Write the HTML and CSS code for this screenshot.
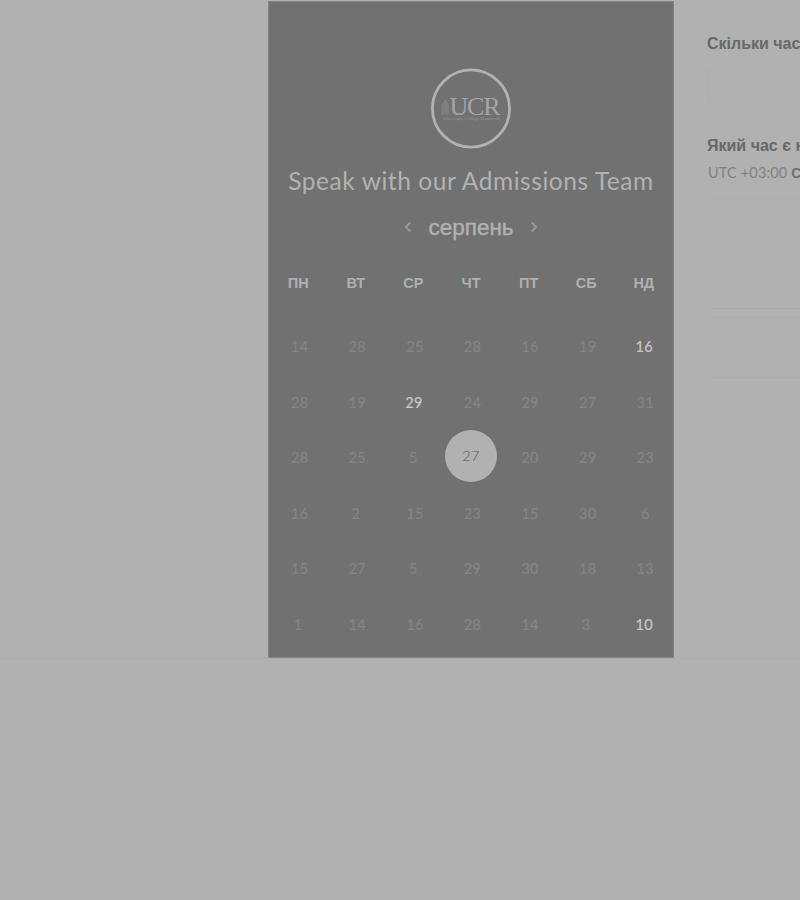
FILE: index.html
```
<!DOCTYPE html>
<html lang="uk">
<head>
<meta charset="utf-8">
<title>Speak with our Admissions Team</title>
<link rel="stylesheet" href="styles.css">
</head>
<body>
<div class="booking">
  <main class="calendar">
    <svg class="logo" viewBox="0 0 80 80" role="img" aria-label="UCR">
      <circle class="ring" cx="40" cy="40" r="38.6"/>
      <path class="tower" d="M10.500 46V36l2-2 2-4 2 4 1.500 2v10z"/>
      <text class="logo-name" x="18.500" y="46.300" textLength="51" lengthAdjust="spacing">UCR</text>
      <text class="logo-sub" x="12" y="51.500" textLength="57" lengthAdjust="spacingAndGlyphs">University College Roosevelt</text>
    </svg>
    <h1 class="title">Speak with our Admissions Team</h1>
    <div class="month">
      <svg class="arrow" viewBox="0 0 8 12"><path d="M6.200 1.500 2 6l4.200 4.500"/></svg>
      <span class="month-name">серпень</span>
      <svg class="arrow" viewBox="0 0 8 12"><path d="M1.800 1.500 6 6l-4.200 4.500"/></svg>
    </div>
    <div class="weekdays"><span>ПН</span><span>ВТ</span><span>СР</span><span>ЧТ</span><span>ПТ</span><span>СБ</span><span>НД</span></div>
    <div class="days">
      <span>14</span><span>28</span><span>25</span><span>28</span><span>16</span><span>19</span><span class="open">16</span>
      <span>28</span><span>19</span><span class="open">29</span><span>24</span><span>29</span><span>27</span><span>31</span>
      <span>28</span><span>25</span><span class="single">5</span><span class="selected"><b>27</b></span><span>20</span><span>29</span><span>23</span>
      <span>16</span><span class="single">2</span><span>15</span><span>23</span><span>15</span><span>30</span><span>6</span>
      <span>15</span><span>27</span><span class="single">5</span><span>29</span><span>30</span><span>18</span><span>13</span>
      <span class="single">1</span><span>14</span><span>16</span><span>28</span><span>14</span><span class="single">3</span><span class="open">10</span>
    </div>
  </main>
  <aside class="details">
    <h2>Скільки час</h2>
    <div class="duration"></div>
    <h2>Який час є н</h2>
    <p class="zone"><span>UTC +03:00</span> <strong>С</strong></p>
    <div class="slot slot-tall"></div>
    <div class="slot"></div>
  </aside>
</div>
</body>
</html>
```
FILE: styles.css
```
* { box-sizing: border-box; }
body {
  margin: 0;
  height: 900px;
  overflow: hidden;
  background: #b1b1b1;
  font-family: "Liberation Sans", sans-serif;
}
.booking {
  display: flex;
  width: 100%;
  height: 659px;
  padding: 1px 0 0 268px;
  border-bottom: 1px solid #adadad;
}
.calendar {
  display: flex;
  flex-direction: column;
  align-items: center;
  flex: none;
  width: 406px;
  height: 657px;
  padding-top: 67px;
  background: #717171;
  border: 1px solid #848484;
}
.logo { flex: none; width: 80px; height: 81px; margin-top: -1px; }
.ring { fill: none; stroke: #b2b2b2; stroke-width: 2.8; }
.tower { fill: #808080; }
.logo-name { font: 26px "Liberation Serif", serif; fill: #a5a5a5; }
.logo-sub { font: 4.5px "Liberation Serif", serif; fill: #999; }
.title {
  margin: 15px 0 0;
  font: 400 24.5px/34px Lato, sans-serif;
  letter-spacing: 0.55px;
  color: #b2b2b2;
  white-space: nowrap;
}
.month {
  display: flex;
  align-items: center;
  justify-content: center;
  gap: 16px;
  height: 34px;
  margin-top: 12px;
}
.month-name {
  font-size: 22.5px;
  line-height: 34px;
  color: #b2b2b2;
  -webkit-text-stroke: 0.35px #b2b2b2;
  padding-top: 2px;
}
.arrow {
  width: 8px;
  height: 12px;
  fill: none;
  stroke: #989898;
  stroke-width: 2;
}
.weekdays, .days {
  display: grid;
  grid-template-columns: repeat(7, 57.6px);
  text-align: center;
}
.weekdays {
  height: 20px;
  margin-top: 29px;
  font: 700 14.5px/20px "Liberation Sans", sans-serif;
  color: #b0b0b0;
}
.days {
  grid-auto-rows: 55.5px;
  margin-top: 25px;
  font: 400 14.5px/57px Lato, sans-serif;
  letter-spacing: 0.3px;
  color: #858585;
  -webkit-text-stroke: 0.2px currentColor;
}
.days span { padding-left: 3px; }
.days .single { padding: 0; }
.days .open { padding-left: 1px; color: #c8c8c8; }
.days .selected {
  display: flex;
  align-items: center;
  justify-content: center;
  padding: 0;
}
.selected b {
  width: 52px;
  height: 52px;
  border-radius: 50%;
  background: #b1b1b1;
  color: #595959;
  font-weight: 300;
  -webkit-text-stroke: 0;
  line-height: 51px;
  margin-bottom: 2px;
  text-align: center;
}
.details { flex: 1; min-width: 0; padding: 32px 0 0 33px; color: #686868; }
h2 {
  margin: 0;
  font: 700 16px/22px "Liberation Sans", sans-serif;
  white-space: nowrap;
}
.duration {
  height: 33px;
  margin: 15px 0 32px;
  border: 1px solid #adadad;
  border-right: 0;
  border-radius: 2px 0 0 2px;
  background: #b0b0b0;
}
.zone {
  display: flex;
  gap: 4px;
  margin: 6px 0 15px 1px;
  font: 14.5px/20px Lato, sans-serif;
  letter-spacing: 0.15px;
  color: #828282;
  white-space: nowrap;
}
.zone strong { font: 700 14px/20px "Liberation Sans", sans-serif; color: #707070; }
.slot {
  height: 61px;
  margin: 8px 0 0 5px;
  border-top: 1px solid #adadad;
  border-bottom: 1px solid #a8a8a8;
}
.slot-tall { height: 111px; margin-top: 0; }
```
